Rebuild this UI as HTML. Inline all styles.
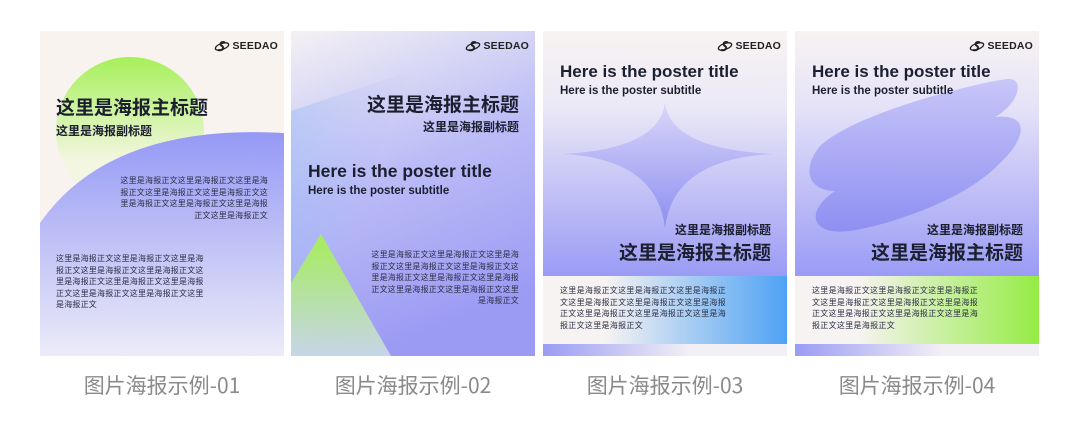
<!DOCTYPE html>
<html><head><meta charset="utf-8"><style>
*{margin:0;padding:0;box-sizing:border-box}
body{width:1080px;height:436px;background:#fff;position:relative;overflow:hidden;font-family:"Liberation Sans","Noto Sans CJK SC",sans-serif;color:#1c1f30}
.p{position:absolute;top:31px;width:244px;height:325px;overflow:hidden}
.p svg.bg{position:absolute;left:0;top:0}
.t{position:absolute;white-space:nowrap;font-weight:bold}
.cn{font-family:"Noto Sans CJK SC",sans-serif}
.b{position:absolute;font-size:8px;letter-spacing:0.2px;line-height:11.5px;color:#2a2d44;font-family:"Noto Sans CJK SC",sans-serif;white-space:nowrap}
.b2{font-size:8px;letter-spacing:0.3px;line-height:11.6px;white-space:normal;word-break:break-all}
.logo{position:absolute;top:9px;right:6px;font-size:10.5px;font-weight:bold;letter-spacing:0.2px;display:flex;align-items:center;gap:2px;color:#222}
.cap{position:absolute;top:370px;width:244px;text-align:center;font-size:21px;color:#8a8a8a;font-family:"Noto Sans CJK SC",sans-serif}
</style></head><body>

<!-- Poster 1 -->
<div class="p" style="left:40px;background:#f8f3ef">
<svg class="bg" width="244" height="325">
<defs>
<linearGradient id="g1" x1="0" y1="0" x2="0" y2="1"><stop offset="0" stop-color="#a6f05a"/><stop offset="0.7" stop-color="#f3f6e0"/></linearGradient>
<linearGradient id="p1" x1="0" y1="0" x2="0" y2="1"><stop offset="0" stop-color="#9599f5"/><stop offset="1" stop-color="#ecebf8"/></linearGradient>
</defs>
<circle cx="90" cy="100" r="74" fill="url(#g1)"/>
<path d="M0,192 Q70,92 244,102 L244,325 L0,325Z" fill="url(#p1)"/>
</svg>
<div class="logo"><svg width="16" height="11" viewBox="0 0 16 11"><ellipse cx="8" cy="5.5" rx="7" ry="3" fill="none" stroke="#222" stroke-width="1.3" transform="rotate(-20 8 5.5)"/><path d="M11 1.5 C7 0,5 3,8 5 C11 7,8 10,4 9" fill="none" stroke="#222" stroke-width="2"/></svg>SEEDAO</div>
<div class="t cn" style="left:16px;top:62px;font-size:19px">这里是海报主标题</div>
<div class="t cn" style="left:16px;top:91px;font-size:12px">这里是海报副标题</div>
<div class="b" style="right:16px;top:144px;text-align:right">这里是海报正文这里是海报正文这里是海<br>报正文这里是海报正文这里是海报正文这<br>里是海报正文这里是海报正文这里是海报<br>正文这里是海报正文</div>
<div class="b" style="left:16px;top:222px">这里是海报正文这里是海报正文这里是海<br>报正文这里是海报正文这里是海报正文这<br>里是海报正文这里是海报正文这里是海报<br>正文这里是海报正文这里是海报正文这里<br>是海报正文</div>
</div>

<!-- Poster 2 -->
<div class="p" style="left:291px">
<svg class="bg" width="244" height="325">
<defs>
<linearGradient id="b2" x1="0" y1="0" x2="0.3" y2="1"><stop offset="0" stop-color="#f4f1f4"/><stop offset="0.5" stop-color="#bcbdf6"/><stop offset="1" stop-color="#9c9bf4"/></linearGradient>
<linearGradient id="b2l" x1="0" y1="0" x2="1" y2="0.3"><stop offset="0" stop-color="#8fb8f5" stop-opacity="0.9"/><stop offset="1" stop-color="#b9bbf6" stop-opacity="0"/></linearGradient>
<linearGradient id="tr" x1="0" y1="0" x2="0" y2="1"><stop offset="0" stop-color="#a5f050"/><stop offset="1" stop-color="#c8d8e8"/></linearGradient>
</defs>
<rect width="244" height="325" fill="url(#b2)"/>
<path d="M0,80 L120,40 L0,330Z" fill="url(#b2l)" opacity="0.5"/>
<path d="M30,203 L100,325 L0,325 L0,252Z" fill="url(#tr)" opacity="0.95"/>
</svg>
<div class="logo"><svg width="16" height="11" viewBox="0 0 16 11"><ellipse cx="8" cy="5.5" rx="7" ry="3" fill="none" stroke="#222" stroke-width="1.3" transform="rotate(-20 8 5.5)"/><path d="M11 1.5 C7 0,5 3,8 5 C11 7,8 10,4 9" fill="none" stroke="#222" stroke-width="2"/></svg>SEEDAO</div>
<div class="t cn" style="right:16px;top:59px;font-size:19px">这里是海报主标题</div>
<div class="t cn" style="right:16px;top:87px;font-size:12px">这里是海报副标题</div>
<div class="t" style="left:17px;top:130px;font-size:17.5px">Here is the poster title</div>
<div class="t" style="left:17px;top:154px;font-size:11.5px">Here is the poster subtitle</div>
<div class="b" style="right:16px;top:218px;text-align:right">这里是海报正文这里是海报正文这里是海<br>报正文这里是海报正文这里是海报正文这<br>里是海报正文这里是海报正文这里是海报<br>正文这里是海报正文这里是海报正文这里<br>是海报正文</div>
</div>

<!-- Poster 3 -->
<div class="p" style="left:543px">
<svg class="bg" width="244" height="325">
<defs>
<linearGradient id="b3" x1="0" y1="0" x2="0" y2="1"><stop offset="0" stop-color="#f7f3f2"/><stop offset="0.3" stop-color="#ece9f7"/><stop offset="1" stop-color="#9a9bf5"/></linearGradient>
<linearGradient id="s3" x1="0" y1="0" x2="0" y2="1"><stop offset="0" stop-color="#d9d7f8"/><stop offset="1" stop-color="#8d8ef2"/></linearGradient>
<linearGradient id="band3" x1="0" y1="0" x2="1" y2="0"><stop offset="0.25" stop-color="#f7f3f2"/><stop offset="1" stop-color="#4ea2f4"/></linearGradient>
<linearGradient id="st3" x1="0" y1="0" x2="1" y2="0"><stop offset="0" stop-color="#9a9cf4"/><stop offset="0.6" stop-color="#f2eff5"/></linearGradient>
</defs>
<rect width="244" height="245" fill="url(#b3)"/>
<path d="M122,72 Q128,118 230,123 Q130,128 122,197 Q114,128 20,123 Q116,118 122,72Z" fill="url(#s3)"/>
<rect y="245" width="244" height="68" fill="url(#band3)"/>
<rect y="313" width="244" height="12" fill="url(#st3)"/>
</svg>
<div class="logo"><svg width="16" height="11" viewBox="0 0 16 11"><ellipse cx="8" cy="5.5" rx="7" ry="3" fill="none" stroke="#222" stroke-width="1.3" transform="rotate(-20 8 5.5)"/><path d="M11 1.5 C7 0,5 3,8 5 C11 7,8 10,4 9" fill="none" stroke="#222" stroke-width="2"/></svg>SEEDAO</div>
<div class="t" style="left:17px;top:31px;font-size:17px">Here is the poster title</div>
<div class="t" style="left:17px;top:54px;font-size:11.5px">Here is the poster subtitle</div>
<div class="t cn" style="right:16px;top:190px;font-size:12px">这里是海报副标题</div>
<div class="t cn" style="right:16px;top:207px;font-size:19px">这里是海报主标题</div>
<div class="b b2" style="left:17px;top:254px;width:168px">这里是海报正文这里是海报正文这里是海报正文这里是海报正文这里是海报正文这里是海报正文这里是海报正文这里是海报正文这里是海报正文这里是海报正文</div>
</div>

<!-- Poster 4 -->
<div class="p" style="left:795px">
<svg class="bg" width="244" height="325">
<defs>
<linearGradient id="b4" x1="0" y1="0" x2="0" y2="1"><stop offset="0" stop-color="#f7f3f2"/><stop offset="0.3" stop-color="#e6e3f8"/><stop offset="1" stop-color="#9a9bf5"/></linearGradient>
<linearGradient id="s4" x1="0" y1="0" x2="0" y2="1"><stop offset="0" stop-color="#c8c6f8"/><stop offset="1" stop-color="#8e8ff2"/></linearGradient>
<linearGradient id="band4" x1="0" y1="0" x2="1" y2="0"><stop offset="0.25" stop-color="#f7f3f2"/><stop offset="1" stop-color="#95ec45"/></linearGradient>
<linearGradient id="st4" x1="0" y1="0" x2="1" y2="0"><stop offset="0" stop-color="#9a9cf4"/><stop offset="0.6" stop-color="#f2eff5"/></linearGradient>
</defs>
<rect width="244" height="245" fill="url(#b4)"/>
<path d="M212,48 C230,46 225,72 200,86 C235,82 232,107 205,132 C170,170 90,195 55,200 C15,205 10,180 40,160 C15,160 5,140 25,115 C60,82 180,52 212,48Z" fill="url(#s4)"/>
<rect y="245" width="244" height="68" fill="url(#band4)"/>
<rect y="313" width="244" height="12" fill="url(#st4)"/>
</svg>
<div class="logo"><svg width="16" height="11" viewBox="0 0 16 11"><ellipse cx="8" cy="5.5" rx="7" ry="3" fill="none" stroke="#222" stroke-width="1.3" transform="rotate(-20 8 5.5)"/><path d="M11 1.5 C7 0,5 3,8 5 C11 7,8 10,4 9" fill="none" stroke="#222" stroke-width="2"/></svg>SEEDAO</div>
<div class="t" style="left:17px;top:31px;font-size:17px">Here is the poster title</div>
<div class="t" style="left:17px;top:54px;font-size:11.5px">Here is the poster subtitle</div>
<div class="t cn" style="right:16px;top:190px;font-size:12px">这里是海报副标题</div>
<div class="t cn" style="right:16px;top:207px;font-size:19px">这里是海报主标题</div>
<div class="b b2" style="left:17px;top:254px;width:168px">这里是海报正文这里是海报正文这里是海报正文这里是海报正文这里是海报正文这里是海报正文这里是海报正文这里是海报正文这里是海报正文这里是海报正文</div>
</div>

<div class="cap" style="left:40px">图片海报示例-01</div>
<div class="cap" style="left:291px">图片海报示例-02</div>
<div class="cap" style="left:543px">图片海报示例-03</div>
<div class="cap" style="left:795px">图片海报示例-04</div>
</body></html>
